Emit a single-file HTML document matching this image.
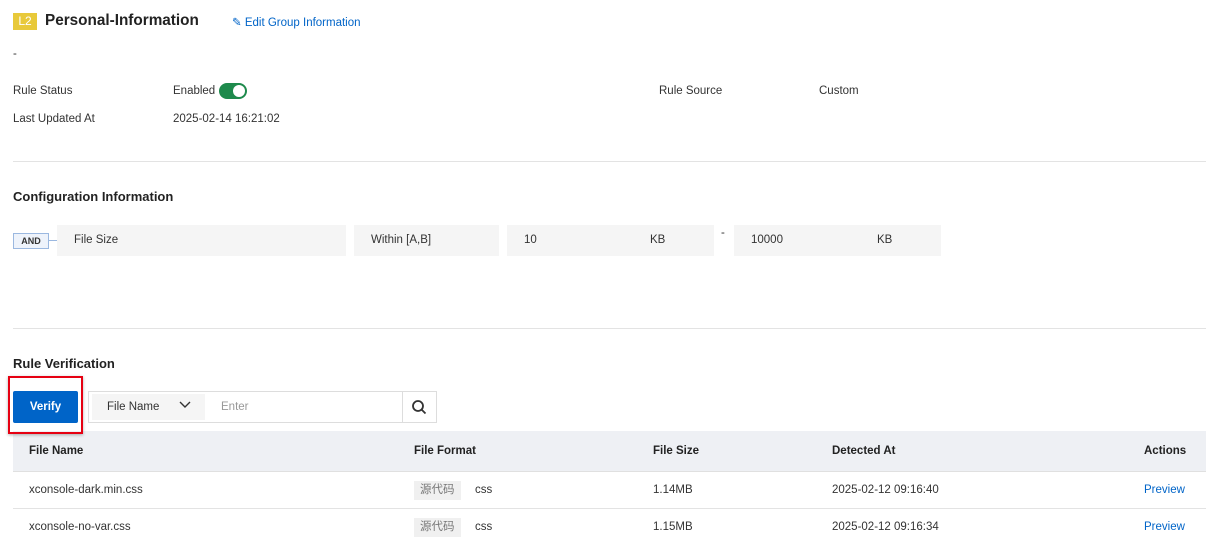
<!DOCTYPE html>
<html><head><meta charset="utf-8"><style>
body{margin:0;width:1206px;height:543px;overflow:hidden;background:#fff;font-family:"Liberation Sans","Noto Sans CJK SC",sans-serif;font-size:11.5px;color:#333;position:relative}
.a{position:absolute;white-space:nowrap}
.box{position:absolute;background:#f5f5f5;height:31px;top:225px}
.hr{position:absolute;left:13px;right:0;height:1px;background:#e3e3e3}
.tag{position:absolute;background:#f0f0f0;color:#777;padding:0 6px;height:19px;line-height:19px}
a{color:#0064c8;text-decoration:none}
</style></head><body>
<div class="a" style="left:13px;top:13px;width:24px;height:17px;background:#e8c93a;color:#fff;text-align:center;line-height:17px;font-size:12px">L2</div>
<div class="a" style="left:45px;top:12px;font-size:15.3px;font-weight:bold;color:#222">Personal-Information</div>
<div class="a" style="left:232px;top:15px;color:#0064c8;font-size:11.5px">✎ Edit Group Information</div>
<div class="a" style="left:13px;top:48px">-</div>
<div class="a" style="left:13px;top:85px">Rule Status</div>
<div class="a" style="left:173px;top:85px">Enabled</div>
<div class="a" style="left:219px;top:83px;width:28px;height:16px;border-radius:8px;background:#1e8a4c"><div style="position:absolute;right:2px;top:2px;width:12px;height:12px;border-radius:6px;background:#fff"></div></div>
<div class="a" style="left:659px;top:85px">Rule Source</div>
<div class="a" style="left:819px;top:85px">Custom</div>
<div class="a" style="left:13px;top:113px">Last Updated At</div>
<div class="a" style="left:173px;top:113px">2025-02-14 16:21:02</div>
<div class="hr" style="top:161px"></div>
<div class="a" style="left:13px;top:189px;font-size:13px;font-weight:bold;color:#222">Configuration Information</div>
<div class="a" style="left:13px;top:233px;width:34px;height:14px;border:1px solid #9bb8e0;background:#eef3fb;font-size:9px;font-weight:bold;text-align:center;line-height:14px">AND</div>
<div class="a" style="left:49px;top:240px;width:8px;height:1px;background:#9bb8e0"></div>
<div class="box" style="left:57px;width:289px"><span class="a" style="left:17px;top:9px">File Size</span></div>
<div class="box" style="left:354px;width:145px"><span class="a" style="left:17px;top:9px">Within [A,B]</span></div>
<div class="box" style="left:507px;width:207px"><span class="a" style="left:17px;top:9px">10</span><span class="a" style="left:143px;top:9px">KB</span></div>
<div class="a" style="left:721px;top:227px">-</div>
<div class="box" style="left:734px;width:207px"><span class="a" style="left:17px;top:9px">10000</span><span class="a" style="left:143px;top:9px">KB</span></div>
<div class="hr" style="top:328px"></div>
<div class="a" style="left:13px;top:356px;font-size:13px;font-weight:bold;color:#222">Rule Verification</div>
<div class="a" style="left:13px;top:431px;width:1193px;height:40px;background:#eef0f4;border-bottom:1px solid #e0e0e0"></div>
<div class="a" style="left:8px;top:376px;width:71px;height:54px;border:2px solid #e60012;box-shadow:0 1px 3px rgba(0,0,0,.3);z-index:2"></div>
<div class="a" style="left:13px;top:391px;width:65px;height:32px;background:#0064c8;border-radius:2px;color:#fff;font-weight:bold;text-align:center;line-height:32px">Verify</div>
<div class="a" style="left:88px;top:391px;width:347px;height:30px;border:1px solid #ddd"></div>
<div class="a" style="left:92px;top:394px;width:113px;height:26px;background:#f5f5f5"></div>
<div class="a" style="left:107px;top:401px">File Name</div>
<svg class="a" style="left:178px;top:400px" width="14" height="10"><path d="M2 2l5 5 5-5" fill="none" stroke="#333" stroke-width="1.4"/></svg>
<div class="a" style="left:221px;top:401px;color:#999">Enter</div>
<div class="a" style="left:402px;top:392px;width:1px;height:30px;background:#ddd"></div>
<svg class="a" style="left:411px;top:399px" width="16" height="16"><circle cx="7" cy="7" r="5" fill="none" stroke="#333" stroke-width="1.8"/><path d="M10.5 10.5l4 4" stroke="#333" stroke-width="1.8"/></svg>
<div class="a" style="left:29px;top:445px;font-weight:bold;color:#222">File Name</div>
<div class="a" style="left:414px;top:445px;font-weight:bold;color:#222">File Format</div>
<div class="a" style="left:653px;top:445px;font-weight:bold;color:#222">File Size</div>
<div class="a" style="left:832px;top:445px;font-weight:bold;color:#222">Detected At</div>
<div class="a" style="left:1144px;top:445px;font-weight:bold;color:#222">Actions</div>
<div class="hr" style="top:508px"></div>
<div class="a" style="left:29px;top:484px">xconsole-dark.min.css</div>
<div class="tag" style="left:414px;top:481px">源代码</div><div class="a" style="left:475px;top:484px">css</div>
<div class="a" style="left:653px;top:484px">1.14MB</div>
<div class="a" style="left:832px;top:484px">2025-02-12 09:16:40</div>
<div class="a" style="left:1144px;top:484px"><a>Preview</a></div>
<div class="a" style="left:29px;top:521px">xconsole-no-var.css</div>
<div class="tag" style="left:414px;top:518px">源代码</div><div class="a" style="left:475px;top:521px">css</div>
<div class="a" style="left:653px;top:521px">1.15MB</div>
<div class="a" style="left:832px;top:521px">2025-02-12 09:16:34</div>
<div class="a" style="left:1144px;top:521px"><a>Preview</a></div>
</body></html>
